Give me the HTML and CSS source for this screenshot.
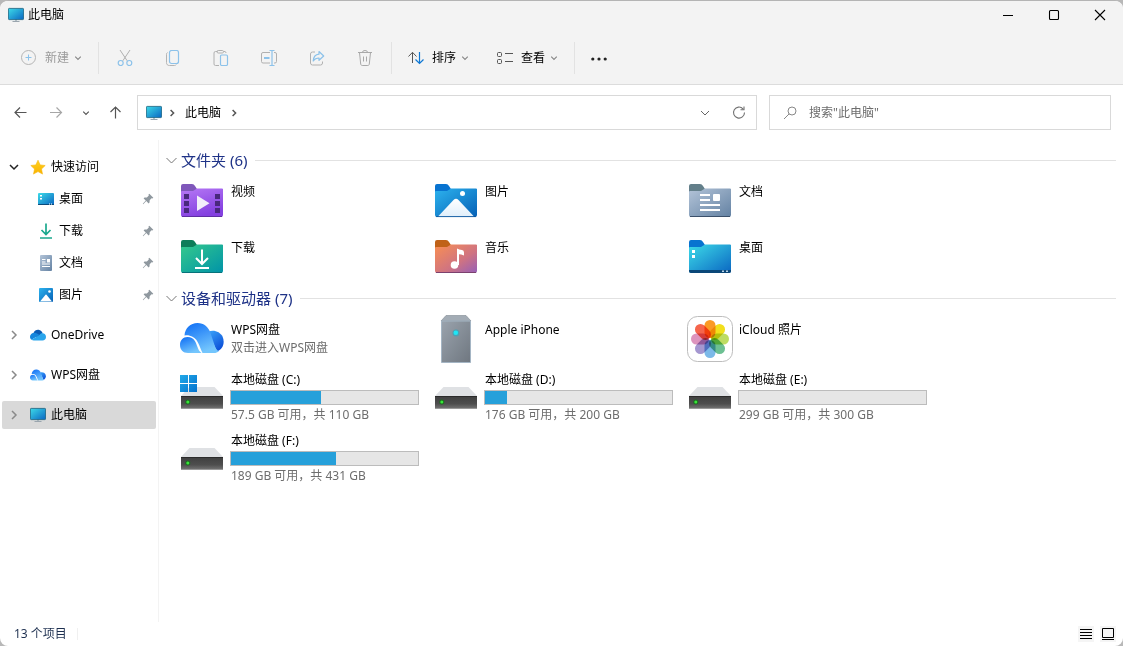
FILE: index.html
```html
<!DOCTYPE html>
<html lang="zh-CN">
<head>
<meta charset="utf-8">
<title>此电脑</title>
<link rel="stylesheet" href="styles.css">
</head>
<body>
<svg class="defs" aria-hidden="true">
  <defs>
    <linearGradient id="g-screen" x1="0" y1="0" x2="1" y2="1"><stop offset="0" stop-color="#3ddbe8"/><stop offset="1" stop-color="#0a66c2"/></linearGradient>
    <linearGradient id="g-video" x1="0" y1="0" x2=".4" y2="1"><stop offset="0" stop-color="#b678f5"/><stop offset="1" stop-color="#8440e0"/></linearGradient>
    <linearGradient id="g-picture" x1="0" y1="0" x2="1" y2="1"><stop offset="0" stop-color="#2db3ee"/><stop offset="1" stop-color="#0560b6"/></linearGradient>
    <linearGradient id="g-doc" x1="0" y1="0" x2="1" y2="1"><stop offset="0" stop-color="#b3c4d8"/><stop offset="1" stop-color="#6482a3"/></linearGradient>
    <linearGradient id="g-down" x1="0" y1="0" x2="1" y2="1"><stop offset="0" stop-color="#34c98c"/><stop offset="1" stop-color="#0093a8"/></linearGradient>
    <linearGradient id="g-music" x1="0" y1="0" x2="1" y2="1"><stop offset="0" stop-color="#f98f52"/><stop offset=".6" stop-color="#cf7382"/><stop offset="1" stop-color="#955fb8"/></linearGradient>
    <linearGradient id="g-hill" x1="0" y1="0" x2="0" y2="1"><stop offset="0" stop-color="#fff"/><stop offset="1" stop-color="#e0effb"/></linearGradient>
    <linearGradient id="g-drive" x1="0" y1="0" x2="0" y2="1"><stop offset="0" stop-color="#3f3f3f"/><stop offset=".6" stop-color="#4e4e4e"/><stop offset="1" stop-color="#777"/></linearGradient>
    <linearGradient id="g-win" x1="0" y1="0" x2="1" y2="1"><stop offset="0" stop-color="#22a9e8"/><stop offset="1" stop-color="#0372ce"/></linearGradient>
    <linearGradient id="g-wps" x1="0" y1="0" x2=".5" y2="1"><stop offset="0" stop-color="#0c6cf5"/><stop offset="1" stop-color="#74c6fd"/></linearGradient>
    <linearGradient id="g-wps-back" x1="0" y1="0" x2=".6" y2="1"><stop offset="0" stop-color="#3aa5fa"/><stop offset="1" stop-color="#0c50d8"/></linearGradient>
    <linearGradient id="g-tower" x1="0" y1="0" x2="1" y2="1"><stop offset="0" stop-color="#9aa3ad"/><stop offset="1" stop-color="#6f7780"/></linearGradient>
    <linearGradient id="g-star" x1="0" y1="0" x2="0" y2="1"><stop offset="0" stop-color="#ffd21e"/><stop offset="1" stop-color="#f9b200"/></linearGradient>
  </defs>
  <symbol id="i-pc" viewBox="0 0 16 16"><path d="M4.500 14.500h7M8 12v2.500" stroke="#9aa5ae" stroke-width="1.200"/><rect x=".4" y="1.400" width="15.200" height="11.200" rx=".8" fill="url(#g-screen)" stroke="#155f7c" stroke-width=".8"/></symbol>
  <symbol id="i-down" viewBox="0 0 8 8"><path d="M1.200 2.600 4 5.400l2.800-2.800" fill="none" stroke="currentColor" stroke-width="1.200"/></symbol>
  <symbol id="i-right" viewBox="0 0 8 8"><path d="M2.600 1 5.600 4l-3 3" fill="none" stroke="currentColor" stroke-width="1.500"/></symbol>
  <symbol id="i-pin" viewBox="0 0 12 12"><path d="M7.300.8 11.300 4.700 10.400 5.500 9.500 5.300 7.700 7.200 7.500 9.600 6.600 10.400 4.300 8.100 1.200 11.200.8 10.800 3.800 7.600 1.600 5.400 2.500 4.500 4.900 4.400 6.800 2.500 6.500 1.600Z" fill="#8f989f"/></symbol>
  <symbol id="i-drive" viewBox="0 0 48 48"><path d="M11.500 16h25L45 25H3Z" fill="#dfe1e4"/><rect x="3" y="25" width="42" height="13" rx="1" fill="url(#g-drive)"/><path d="M3 25.500h42" stroke="#2b2b2b"/><path d="M3.500 37.500h41" stroke="#999"/><circle cx="9.800" cy="31" r="2.500" fill="#1c6c20"/><circle cx="9.800" cy="31" r="1.500" fill="#39e639"/></symbol>
  <symbol id="i-wps" viewBox="0 0 44 30"><path d="M28 9c5-3 12-.5 14.500 4.500C45 19 43.500 26 37 28.500Z" fill="url(#g-wps-back)"/><path d="M4.500 12.500C5 5 10.500 0 17.500 0 24 0 28.500 4 30.500 10l4 12c.8 2.600 2 5.500 4.500 6-1.500 1.400-3 2-5 2H22.500C19 23 18 14 9 12.500c-1.500-.3-3 0-4.500 0Z" fill="url(#g-wps)"/><path d="M7.500 14C14.500 14 16 20 17.500 24c.8 2.500 2 4.500 4 6H8C3 30 0 26.500 0 22c0-4.500 3-8 7.500-8Z" fill="url(#g-wps)"/></symbol>
</svg>

<div class="window">
  <header class="titlebar">
    <svg class="ic16"><use href="#i-pc"/></svg>
    <h1 class="title">此电脑</h1>
    <div class="caption">
      <button class="caption-btn" aria-label="最小化"><svg class="ic12" viewBox="0 0 12 12"><path d="M1 6.500h10" stroke="#000"/></svg></button>
      <button class="caption-btn" aria-label="最大化"><svg class="ic12" viewBox="0 0 12 12"><rect x="1.500" y="1.500" width="9" height="9" rx="1" fill="none" stroke="#000" stroke-width="1.100"/></svg></button>
      <button class="caption-btn" aria-label="关闭"><svg class="ic12" viewBox="0 0 12 12"><path d="m1 1 10 10M11 1 1 11" stroke="#000" stroke-width="1.100"/></svg></button>
    </div>
  </header>

  <div class="toolbar" role="toolbar">
    <button class="tool muted" disabled>
      <svg class="ic16" viewBox="0 0 16 16" fill="none"><circle cx="7.500" cy="7.500" r="7" stroke="#b4b4b4"/><path d="M4.500 7.500h6M7.500 4.500v6" stroke="#8cc2ea"/></svg>
      <span>新建</span><svg class="chev"><use href="#i-down"/></svg>
    </button>
    <span class="sep"></span>
    <button class="tool-icon" disabled aria-label="剪切"><svg class="ic16" viewBox="0 0 16 16" fill="none"><path d="m3 0 7.200 10.800M13 0 5.800 10.800" stroke="#b0b0b0"/><circle cx="3.700" cy="13" r="2.500" stroke="#8cc2ea" stroke-width="1.200"/><circle cx="12.300" cy="13" r="2.500" stroke="#8cc2ea" stroke-width="1.200"/></svg></button>
    <button class="tool-icon" disabled aria-label="复制"><svg class="ic16" viewBox="0 0 16 16" fill="none"><path d="M2.500 2.500c-.7.300-1 1-1 1.800v8.200c0 2 1 3 3 3h5c.8 0 1.500-.3 1.800-1" stroke="#b4b4b4"/><rect x="4.500" y=".5" width="9" height="13" rx="2" stroke="#8cc2ea" stroke-width="1.200"/></svg></button>
    <button class="tool-icon" disabled aria-label="粘贴"><svg class="ic16" viewBox="0 0 16 16" fill="none"><path d="M4.500 1.500H2.500a1.500 1.500 0 0 0-1.500 1.500v11a1.500 1.500 0 0 0 1.500 1.500H6M10.500 1.500h1.500A1.500 1.500 0 0 1 13 3" stroke="#b0b0b0"/><rect x="4" y=".5" width="6.500" height="2.500" rx="1.200" stroke="#b0b0b0"/><rect x="7.500" y="5" width="7" height="10.500" rx="1.200" stroke="#8cc2ea" stroke-width="1.200"/></svg></button>
    <button class="tool-icon" disabled aria-label="重命名"><svg class="ic16" viewBox="0 0 16 16" fill="none"><path d="M9 2.500H2A1.500 1.500 0 0 0 .5 4v7.500A1.500 1.500 0 0 0 2 13h7M13 2.500h1A1.500 1.500 0 0 1 15.500 4v7.500A1.500 1.500 0 0 1 14 13h-1" stroke="#b0b0b0"/><path d="M8.500.5h5M8.500 15.500h5M11 .5v15" stroke="#8cc2ea" stroke-width="1.200"/><path d="M3 8h5.500" stroke="#8cc2ea" stroke-width="2"/></svg></button>
    <button class="tool-icon" disabled aria-label="共享"><svg class="ic16" viewBox="0 0 16 16" fill="none"><path d="M6 2H3.500A2 2 0 0 0 1.500 4v9a2 2 0 0 0 2 2h8a2 2 0 0 0 2-2v-1.500" stroke="#b0b0b0"/><path d="M10 1.500 14.700 6 10 10.300V8C7 8 5.500 9 4.200 11 4.500 7 6.500 4.500 10 4.200Z" stroke="#8cc2ea" stroke-width="1.200" stroke-linejoin="round"/></svg></button>
    <button class="tool-icon" disabled aria-label="删除"><svg class="ic16" viewBox="0 0 16 16" fill="none"><path d="M1 2.500h14M5.500 2.300a2.500 1.800 0 0 1 5 0M2.500 2.500 3.700 14c.1 1 .8 1.500 1.500 1.500h5.600c.7 0 1.400-.5 1.500-1.500l1.200-11.500M6.500 6.500v5M9.500 6.500v5" stroke="#a8a8a8"/></svg></button>
    <span class="sep"></span>
    <button class="tool">
      <svg class="ic16" viewBox="0 0 16 16" fill="none"><path d="M4.500 13V2.500M.5 6.500l4-4.200 4 4.200" stroke="#555"/><path d="M11.500 2v11.500M7.500 9.500l4 4 4-4" stroke="#0f78d4" stroke-width="1.200"/></svg>
      <span>排序</span><svg class="chev"><use href="#i-down"/></svg>
    </button>
    <button class="tool">
      <svg class="ic16" viewBox="0 0 16 16" fill="none" stroke="#555"><rect x=".5" y="2.500" width="4" height="4" rx="1"/><rect x=".5" y="9.500" width="4" height="4" rx="1"/><path d="M8 3.500h8M8 11.500h8"/></svg>
      <span>查看</span><svg class="chev"><use href="#i-down"/></svg>
    </button>
    <span class="sep"></span>
    <button class="tool" aria-label="更多"><svg class="ic16" viewBox="0 0 16 16" fill="#222"><circle cx="1.800" cy="9" r="1.600"/><circle cx="8" cy="9" r="1.600"/><circle cx="14.200" cy="9" r="1.600"/></svg></button>
  </div>

  <div class="navrow">
    <div class="history">
      <button class="nav-btn" aria-label="后退"><svg class="ic16" viewBox="0 0 16 16" fill="none" stroke="#555" stroke-width="1.200"><path d="M14.500 7.500H3M8 2.500 3 7.500l5 5"/></svg></button>
      <button class="nav-btn" aria-label="前进"><svg class="ic16" viewBox="0 0 16 16" fill="none" stroke="#a6a6a6" stroke-width="1.200"><path d="M2 7.500h11.500M8.500 2.500l5 5-5 5"/></svg></button>
      <button class="nav-btn narrow" aria-label="最近位置"><svg class="chev dark"><use href="#i-down"/></svg></button>
      <button class="nav-btn" aria-label="向上"><svg class="ic16" viewBox="0 0 16 16" fill="none" stroke="#555" stroke-width="1.200"><path d="M7.500 13.500V2M2.500 7l5-5 5 5"/></svg></button>
    </div>
    <div class="address">
      <svg class="ic16"><use href="#i-pc"/></svg>
      <svg class="chev dark"><use href="#i-right"/></svg>
      <button class="crumb">此电脑</button>
      <svg class="chev dark"><use href="#i-right"/></svg>
      <div class="address-end">
        <button class="nav-btn" aria-label="以前的位置"><svg class="ic12" viewBox="0 0 12 12"><path d="m2 4 4 4 4-4" fill="none" stroke="#666"/></svg></button>
        <button class="nav-btn" aria-label="刷新"><svg class="ic16" viewBox="0 0 16 16" fill="none" stroke="#707070" stroke-width="1.100"><path d="M13.500 7.500A5.500 5.500 0 1 1 12 3.800M13 1.500v3.200H9.500"/></svg></button>
      </div>
    </div>
    <label class="search">
      <svg class="ic14" viewBox="0 0 14 14" fill="none" stroke="#888"><circle cx="9" cy="5" r="4"/><path d="M6.200 7.800 1 13"/></svg>
      <input class="search-input" type="text" aria-label="搜索" placeholder='搜索"此电脑"'>
    </label>
  </div>

  <div class="body">
    <nav class="sidebar">
      <div class="quick">
        <a class="side-item" href="#quick"><span class="twist open"><svg class="ic12" viewBox="0 0 12 12"><path d="m2 4 4 4 4-4" fill="none" stroke="currentColor" stroke-width="1.500"/></svg></span>
          <svg class="ic16" viewBox="0 0 16 16"><path d="m8 1.200 2.200 4.700 5 .6-3.700 3.500 1 5.100L8 12.600l-4.500 2.500 1-5.100L.8 6.500l5-.6Z" fill="url(#g-star)" stroke="#f6b713" stroke-width=".6" stroke-linejoin="round"/></svg>快速访问</a>
        <a class="side-item sub" href="#desktop"><svg class="ic16" viewBox="0 0 16 16"><rect y="2" width="16" height="12" rx="1" fill="url(#g-screen)"/><path d="M0 13h16v.500q0 .5-1 .5H1q-1 0-1-.5Z" fill="#0b4a7a"/><path d="M2 4h2v1.500H2ZM2 7h2v1.500H2ZM11 12.500h1v1h-1ZM13 12.500h1v1h-1Z" fill="#fff"/></svg>桌面<svg class="pin"><use href="#i-pin"/></svg></a>
        <a class="side-item sub" href="#downloads"><svg class="ic16" viewBox="0 0 16 16" fill="none" stroke="#1aa88d" stroke-width="1.700"><path d="M8 .500v11M3.500 7 8 11.500 12.500 7M2 15h12"/></svg>下载<svg class="pin"><use href="#i-pin"/></svg></a>
        <a class="side-item sub" href="#documents"><svg class="ic16" viewBox="0 0 16 16"><rect x="2" width="12" height="16" rx="1" fill="url(#g-doc)"/><path d="M4 4.500h3.500M4 7h3.500M4 9h8M4 11.500h8" stroke="#fff"/><path d="M9 4h3v3.500H9Z" fill="#fff"/></svg>文档<svg class="pin"><use href="#i-pin"/></svg></a>
        <a class="side-item sub" href="#pictures"><svg class="ic16" viewBox="0 0 16 16"><rect x="1" y="1" width="14" height="14" rx="1" fill="url(#g-picture)"/><path d="M2 14.500 7.500 7.800q.5-.6 1 0L14 14.500Z" fill="#fff"/><circle cx="11.500" cy="4.500" r="1.300" fill="#fff"/></svg>图片<svg class="pin"><use href="#i-pin"/></svg></a>
      </div>
      <div class="roots">
        <a class="side-item" href="#onedrive"><span class="twist"><svg class="ic12" viewBox="0 0 12 12"><path d="m4 2 4 4-4 4" fill="none" stroke="currentColor" stroke-width="1.500"/></svg></span>
          <svg class="ic16" viewBox="0 0 16 16"><path d="M3.500 6C4.500 3.500 7 2.300 9.300 3c1.700.5 2.900 1.700 3.400 3.300L8 10 1 9Z" fill="#0a5cb5"/><path d="M3.600 5.900C1.500 6 0 7.700 0 9.700c0 1.300.6 2.300 1.500 3L9.500 8 7 6.600C6 6 4.800 5.700 3.600 5.900Z" fill="#1486dc"/><path d="M12.500 6.300C11.200 6.100 10.200 6.700 9.500 8L1.500 12.700c.7.500 1.400.8 2.300.8h8.700c2 0 3.500-1.600 3.500-3.600S14.500 6.400 12.500 6.300Z" fill="#2aa5ec"/></svg>OneDrive</a>
        <a class="side-item" href="#wps"><span class="twist"><svg class="ic12" viewBox="0 0 12 12"><path d="m4 2 4 4-4 4" fill="none" stroke="currentColor" stroke-width="1.500"/></svg></span>
          <svg class="ic16"><use href="#i-wps"/></svg>WPS网盘</a>
        <a class="side-item selected" href="#pc" aria-current="page"><span class="twist"><svg class="ic12" viewBox="0 0 12 12"><path d="m4 2 4 4-4 4" fill="none" stroke="currentColor" stroke-width="1.500"/></svg></span>
          <svg class="ic16"><use href="#i-pc"/></svg>此电脑</a>
      </div>
    </nav>

    <main class="content">
      <section class="group">
        <h2 class="group-title"><svg class="ic12" viewBox="0 0 12 12"><path d="m1.500 4 5 5 5-5" fill="none" stroke="#777"/></svg>文件夹 (6)</h2>
        <div class="tiles">
          <a class="tile" href="#videos">
            <svg class="ic48" viewBox="0 0 48 48"><path d="M3 9q0-2 2-2h9q2 0 3 2l2 3H44q1 0 1 1v10H3Z" fill="#7f57ba"/><path d="M3 15q0-1 1-1h11l4-2.500h25q1 0 1 1V38q0 2-2 2H5q-2 0-2-2Z" fill="url(#g-video)"/><path d="M4 39.500h40" stroke="#5e2ea3"/><path d="M6 17h5v5H6ZM6 24h5v5H6ZM6 31h5v5H6ZM37 17h5v5h-5ZM37 24h5v5h-5ZM37 31h5v5h-5Z" fill="#49287d"/><path d="M19 18.500v15.500l12.500-7.700Z" fill="#f2eefa"/></svg>
            <span class="info"><span class="name">视频</span></span></a>
          <a class="tile" href="#pictures">
            <svg class="ic48" viewBox="0 0 48 48"><path d="M3 9q0-2 2-2h9q2 0 3 2l2 3H44q1 0 1 1v10H3Z" fill="#0873d0"/><path d="M3 15q0-1 1-1h11l4-2.500h25q1 0 1 1V38q0 2-2 2H5q-2 0-2-2Z" fill="url(#g-picture)"/><path d="M6 39.500 21.500 23q2.500-2.500 5 0L42 39.500Z" fill="url(#g-hill)"/><path d="M4 39.600h40" stroke="#0a5298" stroke-width=".8"/><circle cx="30.500" cy="16.500" r="2.500" fill="#fff"/></svg>
            <span class="info"><span class="name">图片</span></span></a>
          <a class="tile" href="#documents">
            <svg class="ic48" viewBox="0 0 48 48"><path d="M3 9q0-2 2-2h9q2 0 3 2l2 3H44q1 0 1 1v10H3Z" fill="#637f8a"/><path d="M3 15q0-1 1-1h11l4-2.500h25q1 0 1 1V38q0 2-2 2H5q-2 0-2-2Z" fill="url(#g-doc)"/><path d="M4 39.500h40" stroke="#3b506b"/><path d="M14 18h10M14 23h10M14 28h20M14 33h20" stroke="#fff" stroke-width="2"/><rect x="27" y="17" width="7" height="7" rx="1" fill="#fff"/></svg>
            <span class="info"><span class="name">文档</span></span></a>
          <a class="tile" href="#downloads">
            <svg class="ic48" viewBox="0 0 48 48"><path d="M3 9q0-2 2-2h9q2 0 3 2l2 3H44q1 0 1 1v10H3Z" fill="#0d7d59"/><path d="M3 15q0-1 1-1h11l4-2.500h25q1 0 1 1V38q0 2-2 2H5q-2 0-2-2Z" fill="url(#g-down)"/><path d="M4 39.500h40" stroke="#07727a"/><path d="M24 16.500v14M18 25l6 6 6-6M17 35h14" fill="none" stroke="#fff" stroke-width="2"/></svg>
            <span class="info"><span class="name">下载</span></span></a>
          <a class="tile" href="#music">
            <svg class="ic48" viewBox="0 0 48 48"><path d="M3 9q0-2 2-2h9q2 0 3 2l2 3H44q1 0 1 1v10H3Z" fill="#c06218"/><path d="M3 15q0-1 1-1h11l4-2.500h25q1 0 1 1V38q0 2-2 2H5q-2 0-2-2Z" fill="url(#g-music)"/><path d="M4 39.500h40" stroke="#7b416e"/><path d="M25 15.500q2 1.200 5 1.500 2 .3 2 2.500v3q-3-1.200-5-1.200V32h-2Z" fill="#fff"/><circle cx="22.500" cy="32" r="3.800" fill="#fff"/></svg>
            <span class="info"><span class="name">音乐</span></span></a>
          <a class="tile" href="#desktop">
            <svg class="ic48" viewBox="0 0 48 48"><path d="M3 9q0-2 2-2h9q2 0 3 2l2 3H44q1 0 1 1v10H3Z" fill="#0873d0"/><path d="M3 15q0-1 1-1h11l4-2.500h25q1 0 1 1V38q0 2-2 2H5q-2 0-2-2Z" fill="url(#g-screen)"/><path d="M3 37h42v1q0 2-2 2H5q-2 0-2-2Z" fill="#0b4778"/><path d="M6 17h3v3H6ZM6 22h3v3H6Z" fill="#fff"/><path d="M36 37.500h2v1.500h-2ZM40 37.500h2v1.500h-2Z" fill="#b8d3e8"/></svg>
            <span class="info"><span class="name">桌面</span></span></a>
        </div>
      </section>

      <section class="group">
        <h2 class="group-title"><svg class="ic12" viewBox="0 0 12 12"><path d="m1.500 4 5 5 5-5" fill="none" stroke="#777"/></svg>设备和驱动器 (7)</h2>
        <div class="tiles">
          <a class="tile" href="#wps">
            <svg class="ic48" viewBox="0 0 48 48"><use href="#i-wps" x="2" y="8" width="44" height="30"/></svg>
            <span class="info"><span class="name">WPS网盘</span><span class="note">双击进入WPS网盘</span></span></a>
          <a class="tile" href="#iphone">
            <svg class="ic48" viewBox="0 0 48 48"><path d="M14 .5h20L39 6H9Z" fill="#a3acb5" stroke="#7f8992" stroke-width=".6"/><path d="M9.500 6h29v41.500h-29Z" fill="url(#g-tower)" stroke="#a4b5c4"/><circle cx="24" cy="18" r="3.500" fill="#4e9fb2"/><circle cx="23.800" cy="17.800" r="2.300" fill="#1ee6f5"/></svg>
            <span class="info"><span class="name">Apple iPhone</span></span></a>
          <a class="tile" href="#icloud">
            <svg class="ic48 petals" viewBox="0 0 48 48"><rect x="1.500" y="1.500" width="45" height="45" rx="10" fill="#fff" stroke="#bdbdbd"/>
              <rect x="18.500" y="5" width="11" height="18" rx="5.500" fill="#fb9a24"/>
              <rect x="18.500" y="5" width="11" height="18" rx="5.500" fill="#f2df1c" transform="rotate(45 24 24)"/>
              <rect x="18.500" y="5" width="11" height="18" rx="5.500" fill="#bddc62" transform="rotate(90 24 24)"/>
              <rect x="18.500" y="5" width="11" height="18" rx="5.500" fill="#6cc092" transform="rotate(135 24 24)"/>
              <rect x="18.500" y="5" width="11" height="18" rx="5.500" fill="#7cb9e8" transform="rotate(180 24 24)"/>
              <rect x="18.500" y="5" width="11" height="18" rx="5.500" fill="#a597d0" transform="rotate(225 24 24)"/>
              <rect x="18.500" y="5" width="11" height="18" rx="5.500" fill="#dd94bd" transform="rotate(270 24 24)"/>
              <rect x="18.500" y="5" width="11" height="18" rx="5.500" fill="#f5654c" transform="rotate(315 24 24)"/></svg>
            <span class="info"><span class="name">iCloud 照片</span></span></a>
          <a class="tile disk" href="#c">
            <svg class="ic48" viewBox="0 0 48 48"><use href="#i-drive"/><path d="M2 4h8v8H2ZM11 4h8v8h-8ZM2 13h8v8H2ZM11 13h8v8h-8Z" fill="url(#g-win)"/></svg>
            <span class="info"><span class="name">本地磁盘 (C:)</span><span class="bar"><span class="fill" style="width:48%"></span></span><span class="note">57.5 GB 可用，共 110 GB</span></span></a>
          <a class="tile disk" href="#d">
            <svg class="ic48"><use href="#i-drive"/></svg>
            <span class="info"><span class="name">本地磁盘 (D:)</span><span class="bar"><span class="fill" style="width:12%"></span></span><span class="note">176 GB 可用，共 200 GB</span></span></a>
          <a class="tile disk" href="#e">
            <svg class="ic48"><use href="#i-drive"/></svg>
            <span class="info"><span class="name">本地磁盘 (E:)</span><span class="bar"><span class="fill" style="width:0%"></span></span><span class="note">299 GB 可用，共 300 GB</span></span></a>
          <a class="tile disk" href="#f">
            <svg class="ic48"><use href="#i-drive"/></svg>
            <span class="info"><span class="name">本地磁盘 (F:)</span><span class="bar"><span class="fill" style="width:56%"></span></span><span class="note">189 GB 可用，共 431 GB</span></span></a>
        </div>
      </section>
    </main>
  </div>

  <footer class="status">
    <span class="count">13 个项目</span>
    <div class="views">
      <button class="view-btn" aria-label="详细信息"><svg class="ic16" viewBox="0 0 16 16"><path d="M2 3.500h12M2 6.500h12M2 9.500h12M2 12.500h12" stroke="#000"/></svg></button>
      <button class="view-btn" aria-label="大图标"><svg class="ic16" viewBox="0 0 16 16"><path d="M2.500 2.500h11v9h-11ZM2 13.500h12" fill="none" stroke="#000"/></svg></button>
    </div>
  </footer>
</div>
</body>
</html>
```
FILE: styles.css
```css
* { box-sizing: border-box; }

body {
  margin: 0;
  background: #b8b8b8;
  font: 12px/18px "Noto Sans", "Noto Sans CJK SC", sans-serif;
  color: #000;
}

button, input { font: inherit; color: inherit; }
button { display: flex; align-items: center; justify-content: center; padding: 0; border: 0; background: none; }
a { color: inherit; text-decoration: none; }
svg { display: block; flex: none; }

.defs { position: absolute; width: 0; height: 0; }
.ic12 { width: 12px; height: 12px; }
.ic14 { width: 14px; height: 14px; }
.ic16 { width: 16px; height: 16px; }
.ic48 { width: 48px; height: 48px; }
.chev { width: 8px; height: 8px; color: #888; }
.chev.dark { color: #555; }

.window {
  display: flex;
  flex-direction: column;
  min-height: 100vh;
  overflow: hidden;
  border-top: 1px solid #b4b4b4;
  border-radius: 8px;
  background: #fff;
}

/* Title bar */
.titlebar { display: flex; align-items: center; gap: 4px; height: 28px; padding-left: 8px; background: #f3f3f3; }
.title { margin: 0; font-size: 12px; font-weight: 400; }
.caption { display: flex; align-self: stretch; margin-left: auto; }
.caption-btn { width: 46px; }

/* Command bar */
.toolbar { display: flex; align-items: center; gap: 4px; height: 56px; padding: 2px 0 0 9px; border-bottom: 1px solid #dcdcdc; background: #f3f3f3; }
.tool { height: 32px; padding: 0 12px; gap: 8px; }
.tool .chev { margin-left: -3px; }
.tool.muted { color: #9a9a9a; }
.tool-icon { width: 44px; height: 32px; }
.sep { width: 1px; height: 32px; background: #e2e2e2; }

/* Navigation row */
.navrow { display: flex; padding: 10px 12px 10px 4px; }
.history { display: flex; align-items: center; gap: 4px; margin-right: 5px; }
.nav-btn { width: 32px; height: 32px; }
.nav-btn.narrow { width: 20px; }
.address { display: flex; flex: 620 1 620px; align-items: center; gap: 6px; height: 35px; margin-right: 12px; padding: 0 1px 0 8px; border: 1px solid #d9d9d9; }
.crumb { padding: 0 3px; }
.address-end { display: flex; gap: 2px; margin-left: auto; }
.search { display: flex; flex: 342 1 342px; align-items: center; gap: 12px; height: 35px; padding: 0 13px; border: 1px solid #d9d9d9; }
.search-input { flex: 1; min-width: 0; padding: 0; border: 0; outline: 0; background: none; }
.search-input::placeholder { color: #6d6d6d; opacity: 1; }

.body { display: flex; flex: 1; }

/* Navigation pane */
.sidebar { width: 159px; padding: 11px 2px 0; border-right: 1px solid #f3f3f3; }
.side-item { display: flex; align-items: center; gap: 5px; height: 32px; border-radius: 2px; }
.side-item.sub { padding-left: 36px; }
.twist { display: flex; justify-content: center; width: 23px; color: #8a8a8a; }
.twist.open { color: #222; }
.pin { width: 12px; height: 12px; margin-left: auto; margin-right: 2px; }
.roots { display: grid; gap: 12px; margin-top: 10px; }
.roots .side-item { height: 28px; }
.side-item.selected { background: #d9d9d9; }

/* Content */
.content { flex: 1; min-width: 0; padding-top: 7px; }
.group-title { display: flex; align-items: center; gap: 4px; height: 26px; margin: 0; padding: 0 7px 0 6px; font-size: 15px; font-weight: 400; color: #1e3287; }
.group-title::after { content: ""; flex: 1; height: 1px; margin-left: 4px; background: #e2e2e2; }
.tiles { display: grid; grid-template-columns: repeat(auto-fill, 254px); padding-left: 19px; }
.tile { display: flex; gap: 4px; padding: 4px 0; }
.info { display: flex; flex-direction: column; width: 189px; padding-top: 6px; }
.disk .info { padding-top: 0; }
.name, .note { padding-left: 1px; }
.note { color: #6d6d6d; }
.bar { display: flex; height: 15px; margin: 1px 0; border: 1px solid #bcbcbc; background: #e6e6e6; }
.fill { background: #26a0da; }
.petals rect + rect { mix-blend-mode: multiply; }

/* Status bar */
.status { display: flex; align-items: center; justify-content: space-between; height: 24px; padding: 0 7px 0 14px; color: #1d2f4f; }
.count { padding-right: 10px; border-right: 1px solid #f0f0f0; line-height: 12px; }
.views { display: flex; gap: 6px; }
.view-btn { background: #f5f5f5; }
```
